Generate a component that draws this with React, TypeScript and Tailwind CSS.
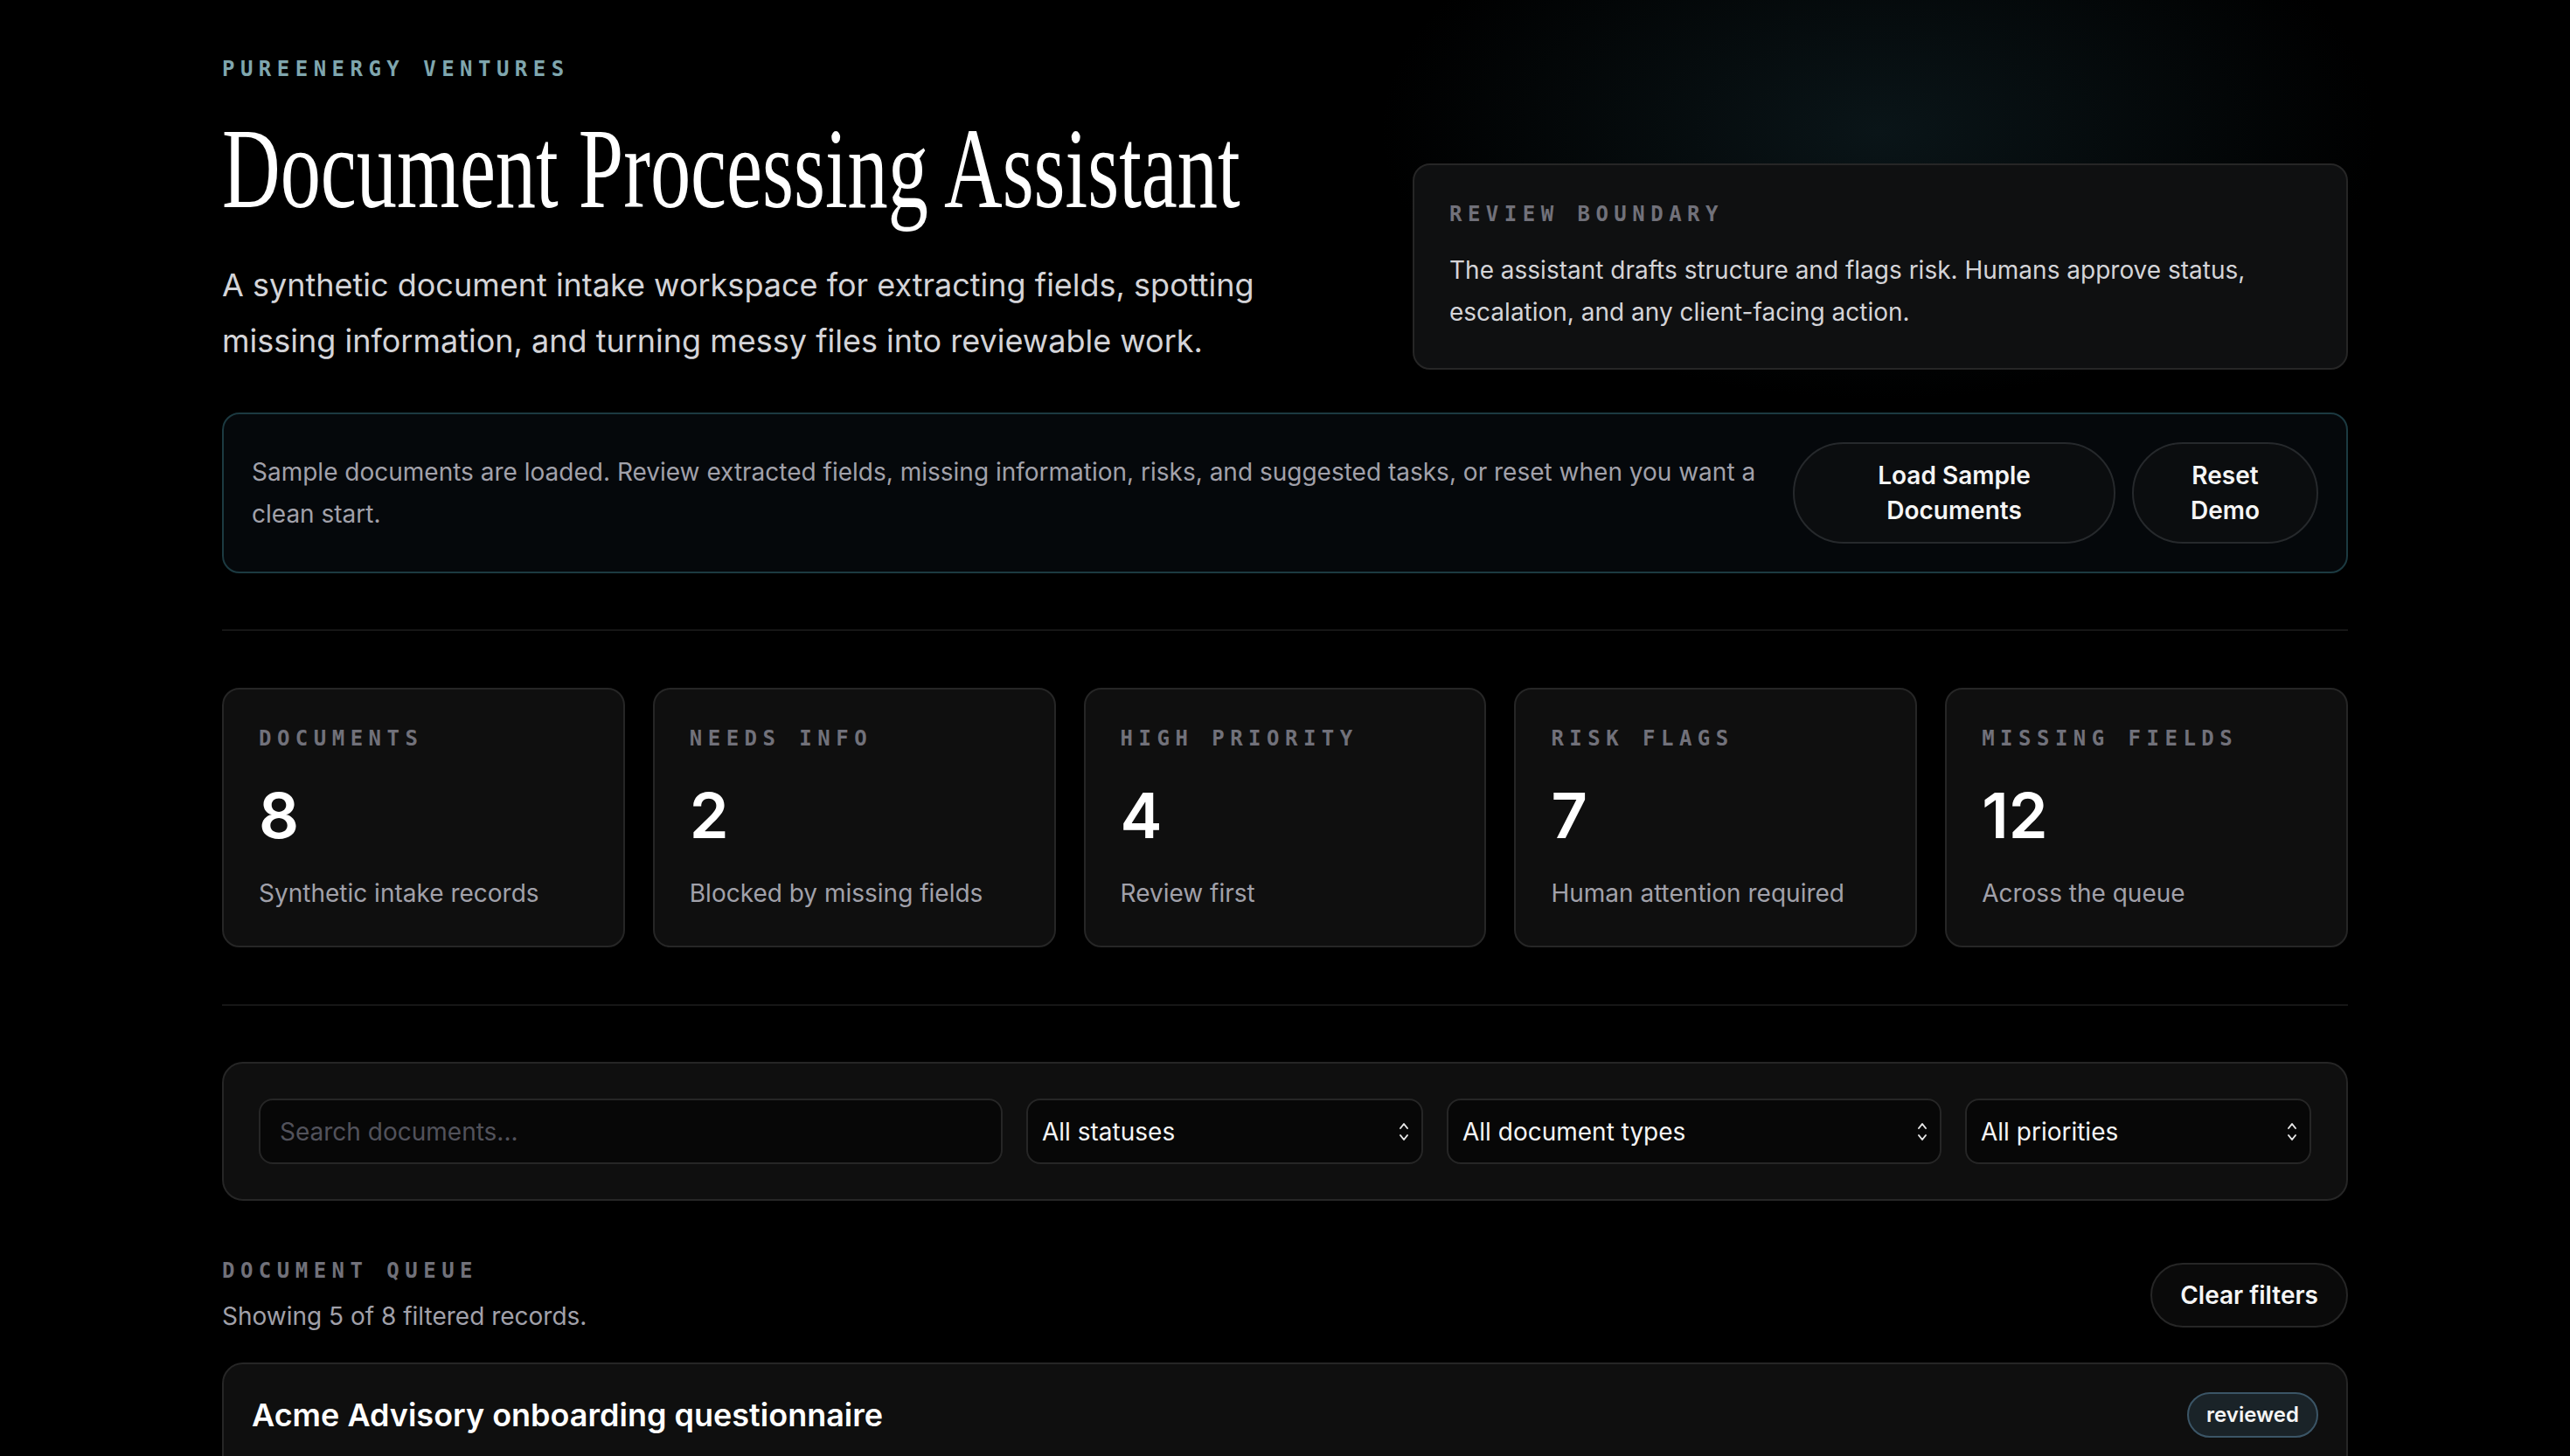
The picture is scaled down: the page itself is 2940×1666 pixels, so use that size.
import React from "react";

const mono = "font-['DejaVu_Sans_Mono','Liberation_Mono',monospace] font-bold";
const sans = "font-['Inter','Noto_Sans',sans-serif]";

function Chevrons() {
  return (
    <svg
      width="16"
      height="24"
      viewBox="0 0 16 24"
      fill="none"
      stroke="#e5e5e5"
      strokeWidth="2"
      strokeLinecap="round"
      strokeLinejoin="round"
      className="pointer-events-none absolute right-[12px] top-1/2 -translate-y-1/2"
    >
      <path d="M4 8 L8 3 L12 8" />
      <path d="M4 16 L8 21 L12 16" />
    </svg>
  );
}

function SelectBox({ label }: { label: string }) {
  return (
    <div className="relative h-[75px] rounded-[16px] border-2 border-[#262626] bg-[#070707]">
      <div className="flex h-full items-center pl-[16px] pr-[40px] text-[28px] text-[#f5f5f5]">
        {label}
      </div>
      <Chevrons />
    </div>
  );
}

const stats = [
  { label: "DOCUMENTS", value: "8", desc: "Synthetic intake records" },
  { label: "NEEDS INFO", value: "2", desc: "Blocked by missing fields" },
  { label: "HIGH PRIORITY", value: "4", desc: "Review first" },
  { label: "RISK FLAGS", value: "7", desc: "Human attention required" },
  { label: "MISSING FIELDS", value: "12", desc: "Across the queue" },
];

export default function App() {
  return (
    <div className={`relative min-h-screen overflow-hidden bg-black ${sans}`}>
      <div className="pointer-events-none absolute left-[1500px] top-[-200px] h-[700px] w-[1300px] bg-[radial-gradient(ellipse_at_center,rgba(18,38,44,0.55),rgba(0,0,0,0)_62%)]" />
      <div className="relative mx-auto max-w-[2560px] px-[64px] pt-[63px] pb-[200px]">
        {/* Hero */}
        <div className="flex items-end justify-between">
          <div>
            <div className={`${mono} text-[24px] leading-[32px] tracking-[0.27em] text-[#7fa6ae]`}>
              PUREENERGY VENTURES
            </div>
            <h1 className="mt-[32px] h-[131px] w-[1170px] overflow-visible whitespace-nowrap font-['Liberation_Serif','Times_New_Roman',serif] text-[131px] font-normal leading-[131px] text-white">
              <span className="inline-block origin-left scale-x-[0.705]">Document Processing Assistant</span>
            </h1>
            <p className="mt-[36px] max-w-[1280px] text-[36px] leading-[64px] text-[#d4d4d8]">
              A synthetic document intake workspace for extracting fields, spotting missing information, and turning messy files into reviewable work.
            </p>
          </div>
          <div className="mb-[-1px] w-[1070px] shrink-0 rounded-[20px] border-2 border-[#262626] bg-[#0f1011] p-[40px]">
            <div className={`${mono} text-[24px] leading-[32px] tracking-[0.27em] text-[#71717a]`}>
              REVIEW BOUNDARY
            </div>
            <p className="mt-[24px] text-[28px] leading-[48px] text-[#d4d4d8]">
              The assistant drafts structure and flags risk. Humans approve status, escalation, and any client-facing action.
            </p>
          </div>
        </div>

        {/* Banner */}
        <div className="mt-[50px] flex items-center gap-[22px] rounded-[20px] border-2 border-[#1c3a41] bg-[#05080b] p-[32px]">
          <p className="flex-1 text-[28px] leading-[48px] text-[#a1a1aa]">
            Sample documents are loaded. Review extracted fields, missing information, risks, and suggested tasks, or reset when you want a clean start.
          </p>
          <div className="flex shrink-0 gap-[19px]">
            <button className="w-[369px] rounded-full border-2 border-[#26292c] bg-[#0b0d0f] px-[40px] py-[16px] text-center text-[28px] font-semibold leading-[40px] text-[#f5f5f5]">
              Load Sample Documents
            </button>
            <button className="w-[213px] rounded-full border-2 border-[#26292c] bg-[#0b0d0f] px-[40px] py-[16px] text-center text-[28px] font-semibold leading-[40px] text-[#f5f5f5]">
              Reset Demo
            </button>
          </div>
        </div>

        <div className="mt-[64px] h-[2px] bg-[#161616]" />

        {/* Stats */}
        <div className="mt-[65px] grid grid-cols-5 gap-[32px]">
          {stats.map((s) => (
            <div key={s.label} className="rounded-[20px] border-2 border-[#262626] bg-[#0f0f0f] p-[40px]">
              <div className={`${mono} text-[24px] leading-[32px] tracking-[0.27em] text-[#71717a]`}>{s.label}</div>
              <div className="mt-[32px] text-[72px] font-semibold leading-[80px] text-white">{s.value}</div>
              <div className="mt-[29px] text-[28px] leading-[40px] text-[#a1a1aa]">{s.desc}</div>
            </div>
          ))}
        </div>

        <div className="mt-[65px] h-[2px] bg-[#161616]" />

        {/* Filters */}
        <div className="mt-[64px] grid grid-cols-[851px_454px_566px_396px] gap-[27px] rounded-[24px] border-2 border-[#262626] bg-[#0f0f0f] p-[40px]">
          <div className="flex h-[75px] items-center rounded-[16px] border-2 border-[#262626] bg-[#070707] px-[22px] text-[28px] text-[#52525b]">
            Search documents...
          </div>
          <SelectBox label="All statuses" />
          <SelectBox label="All document types" />
          <SelectBox label="All priorities" />
        </div>

        {/* Queue header */}
        <div className="mt-[64px] flex items-center justify-between">
          <div>
            <div className={`${mono} text-[24px] leading-[32px] tracking-[0.27em] text-[#71717a]`}>DOCUMENT QUEUE</div>
            <div className="mt-[16px] text-[28px] leading-[40px] text-[#a1a1aa]">Showing 5 of 8 filtered records.</div>
          </div>
          <button className="rounded-full border-2 border-[#262626] bg-[#0a0a0a] px-[32px] py-[15px] text-[28px] font-semibold leading-[40px] text-[#f5f5f5]">
            Clear filters
          </button>
        </div>

        {/* First document card */}
        <div className="mt-[33px] h-[320px] rounded-[24px] border-2 border-[#262626] bg-[#0f0f0f] p-[32px]">
          <div className="flex items-center justify-between">
            <div className="text-[36px] font-semibold leading-[52px] text-white">
              Acme Advisory onboarding questionnaire
            </div>
            <span className="flex h-[52px] items-center rounded-full border-2 border-[#3b5566] bg-[#1a2328] px-[20px] text-[24px] font-semibold text-[#f5f5f5]">
              reviewed
            </span>
          </div>
        </div>
      </div>
    </div>
  );
}
